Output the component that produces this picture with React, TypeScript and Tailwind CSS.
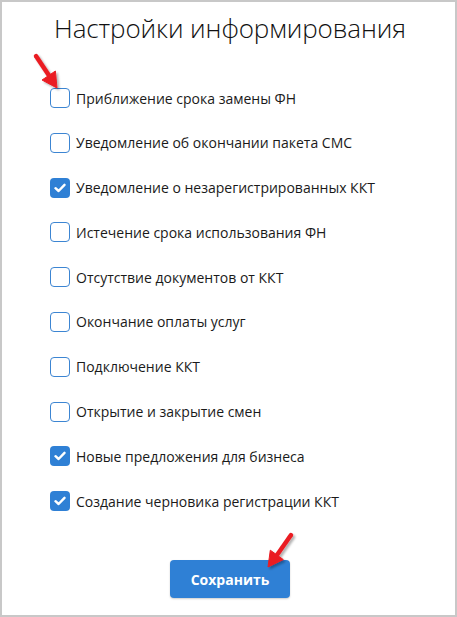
import React from "react";

const items: [string, boolean][] = [
  ["Приближение срока замены ФН", false],
  ["Уведомление об окончании пакета СМС", false],
  ["Уведомление о незарегистрированных ККТ", true],
  ["Истечение срока использования ФН", false],
  ["Отсутствие документов от ККТ", false],
  ["Окончание оплаты услуг", false],
  ["Подключение ККТ", false],
  ["Открытие и закрытие смен", false],
  ["Новые предложения для бизнеса", true],
  ["Создание черновика регистрации ККТ", true],
];

export default function App() {
  return (
    <div className="w-[457px] h-[617px] bg-white border-2 border-[#c8c8c8] relative" style={{ fontFamily: '"Open Sans", sans-serif' }}>
      <h1 className="text-center text-[26px] font-light text-[#111] mt-[6px] leading-[40px] tracking-[-0.1px] pl-[3px]">
        Настройки информирования
      </h1>
      <div className="pl-[48px] pt-[40px] flex flex-col gap-[24.8px]">
        {items.map(([label, checked]) => (
          <div key={label} className="flex items-center h-[20px]">
            {checked ? (
              <div className="w-[20px] h-[20px] rounded-[4px] bg-[#2f80d5] flex items-center justify-center">
                <svg width="12" height="10" viewBox="0 0 12 10">
                  <path d="M1.5 5.2 L4.6 8 L10.5 1.8" stroke="white" strokeWidth="2.4" fill="none" strokeLinecap="round" strokeLinejoin="round" />
                </svg>
              </div>
            ) : (
              <div className="w-[20px] h-[20px] rounded-[4px] border-[1.5px] border-[#3c85d2] bg-white" />
            )}
            <span className="ml-[6px] text-[14px] text-[#1a1a1a]">{label}</span>
          </div>
        ))}
      </div>
      <div className="flex justify-center mt-[49px] pl-[3px]">
        <button className="w-[120px] h-[38px] rounded-[4px] bg-[#2f80d5] text-white font-bold text-[14px] shadow-[0_1px_2px_rgba(0,0,0,0.2)]">
          Сохранить
        </button>
      </div>
      <svg className="absolute left-[-2px] top-[-2px] pointer-events-none" width="457" height="617" viewBox="0 0 457 617">
        <defs>
          <filter id="sh" x="-50%" y="-50%" width="200%" height="200%">
            <feDropShadow dx="2" dy="2" stdDeviation="1.3" floodColor="#000" floodOpacity="0.3" />
          </filter>
        </defs>
        <g filter="url(#sh)" fill="#ea1c24" stroke="#ea1c24">
          <line x1="36" y1="56" x2="50" y2="77" strokeWidth="4.5" strokeLinecap="round" />
          <polygon points="57,88 42,80 55.4,71" strokeWidth="1" strokeLinejoin="round" />
          <line x1="291" y1="535" x2="277" y2="555" strokeWidth="4.5" strokeLinecap="round" />
          <polygon points="268,567 270.3,550.2 283.3,559.6" strokeWidth="1" strokeLinejoin="round" />
        </g>
      </svg>
    </div>
  );
}
